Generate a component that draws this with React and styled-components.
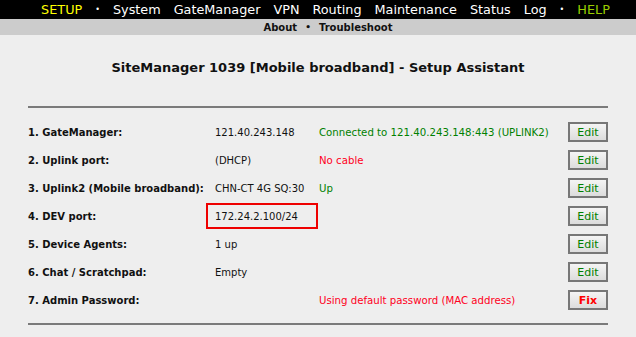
import styled, { createGlobalStyle } from "styled-components";

const GlobalStyle = createGlobalStyle`
  body {
    margin: 0;
    background: #eeeeee;
    font-family: "DejaVu Sans", Verdana, sans-serif;
  }
`;

const menu = [
  { label: "SETUP", color: "#ffff00" },
  { dot: true },
  { label: "System" },
  { label: "GateManager" },
  { label: "VPN" },
  { label: "Routing" },
  { label: "Maintenance" },
  { label: "Status" },
  { label: "Log" },
  { dot: true },
  { label: "HELP", color: "#99cc00" },
];

const rows = [
  {
    label: "1. GateManager:",
    value: "121.40.243.148",
    status: "Connected to 121.40.243.148:443 (UPLINK2)",
    tone: "ok",
    action: "Edit",
  },
  { label: "2. Uplink port:", value: "(DHCP)", status: "No cable", tone: "bad", action: "Edit" },
  {
    label: "3. Uplink2 (Mobile broadband):",
    value: "CHN-CT 4G SQ:30",
    status: "Up",
    tone: "ok",
    action: "Edit",
  },
  { label: "4. DEV port:", value: "172.24.2.100/24", highlight: true, action: "Edit" },
  { label: "5. Device Agents:", value: "1 up", action: "Edit" },
  { label: "6. Chat / Scratchpad:", value: "Empty", action: "Edit" },
  {
    label: "7. Admin Password:",
    value: "",
    status: "Using default password (MAC address)",
    tone: "bad",
    action: "Fix",
  },
];

function App() {
  return (
    <>
      <GlobalStyle />
      <TopBar>
        {menu.map((m, i) =>
          m.dot ? (
            <Dot key={i}>•</Dot>
          ) : (
            <MenuItem key={i} $color={m.color}>
              {m.label}
            </MenuItem>
          )
        )}
      </TopBar>
      <SubBar>
        <SubItem>About</SubItem>
        <SubDot>•</SubDot>
        <SubItem>Troubleshoot</SubItem>
      </SubBar>
      <Title>SiteManager 1039 [Mobile broadband] - Setup Assistant</Title>
      <Panel>
        {rows.map((r) => (
          <Row key={r.label}>
            <Label>{r.label}</Label>
            {r.highlight ? <Highlight>{r.value}</Highlight> : <Value>{r.value}</Value>}
            <Status $tone={r.tone}>{r.status}</Status>
            <Button $fix={r.action === "Fix"}>{r.action}</Button>
          </Row>
        ))}
      </Panel>
    </>
  );
}

export default App;

const TopBar = styled.div`
  height: 19px;
  background: #000;
  display: flex;
  align-items: center;
  justify-content: center;
  gap: 13px;
  padding-left: 15px;
  font-size: 12.8px;
  line-height: 19px;
`;

const MenuItem = styled.span`
  color: ${(p) => p.$color || "#fff"};
`;

const Dot = styled.span`
  color: #fff;
  font-size: 8px;
`;

const SubBar = styled.div`
  height: 16px;
  background: #cccccc;
  display: flex;
  align-items: center;
  justify-content: center;
  gap: 8px;
  padding-left: 20px;
  font-size: 10px;
  font-weight: bold;
  color: #111;
`;

const SubItem = styled.span``;

const SubDot = styled.span`
  font-size: 9px;
`;

const Title = styled.h1`
  margin: 0;
  padding-top: 25px;
  height: 47px;
  box-sizing: border-box;
  text-align: center;
  font-size: 13px;
  font-weight: bold;
  color: #111;
`;

const Panel = styled.div`
  width: 580px;
  margin: 24px auto 0;
  padding: 10px 0 9px;
  border-top: 2px solid #7a7a7a;
  border-bottom: 2px solid #7a7a7a;
`;

const Row = styled.div`
  display: grid;
  grid-template-columns: 187px 104px 1fr 40px;
  align-items: center;
  height: 28px;
  font-size: 10px;
  color: #111;
`;

const Label = styled.span`
  font-weight: bold;
`;

const Value = styled.span``;

const Highlight = styled.span`
  box-sizing: border-box;
  height: 26px;
  width: 112px;
  margin-left: -9px;
  padding-left: 7px;
  border: 2px solid #ee0000;
  display: flex;
  align-items: center;
`;

const Status = styled.span`
  color: ${(p) => (p.$tone === "bad" ? "#ff0022" : "#008000")};
  font-size: 10.2px;
`;

const Button = styled.span`
  box-sizing: border-box;
  height: 20px;
  width: 40px;
  border: 2px solid #777;
  background: linear-gradient(#f4f4f4, #dcdcdc);
  display: flex;
  align-items: center;
  justify-content: center;
  font-size: 11px;
  color: ${(p) => (p.$fix ? "#ff0000" : "#008000")};
  font-weight: ${(p) => (p.$fix ? "bold" : "normal")};
`;
